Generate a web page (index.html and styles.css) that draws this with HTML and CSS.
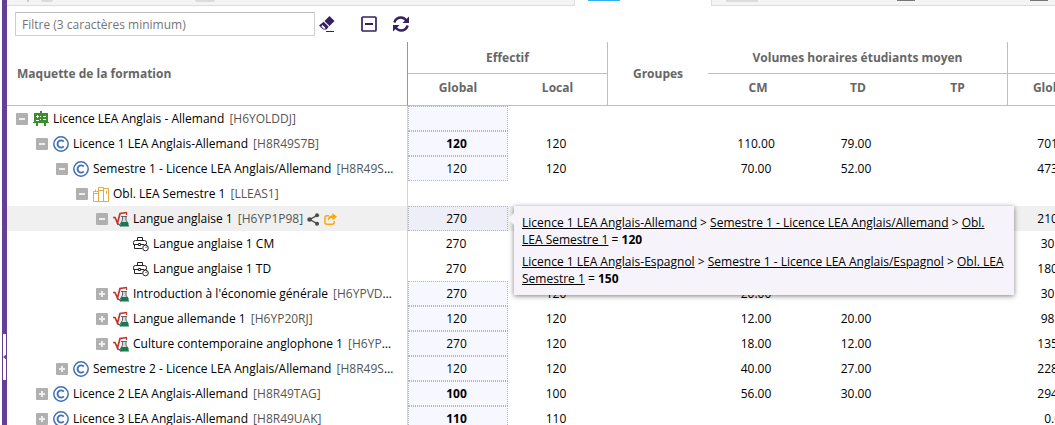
FILE: index.html
```
<!DOCTYPE html>
<html lang="fr">
<head>
    <meta charset="UTF-8">
    <meta name="viewport" content="width=device-width, initial-scale=1.0">
    <title>Maquette de la formation</title>
    <link rel="stylesheet" href="styles.css">
</head>
<body>
    <svg class="sprite" aria-hidden="true">
        <symbol id="i-board" viewBox="0 0 16 16">
            <path fill="#3a8e2b" d="M7 0h2v2h6v9h1v1h-3v3h-2v-3H5v3H3v-3H0v-1h1V2h6z"/>
            <path fill="#fff" d="M3 5h1V4h1v1h1v1H5v1H4V6H3zM10 5h3v1h-3zM3 9h3v1H3zM10 8h3v1h-3zM7 5h1v1H7zM7 8h1v1H7z"/>
        </symbol>
        <symbol id="i-c" viewBox="0 0 16 16">
            <circle cx="8" cy="8" r="7.200" fill="#fff" stroke="#3f6fb5" stroke-width="1.500"/>
            <path fill="none" stroke="#3f6fb5" stroke-width="1.900" d="M10.800 5.600A3.600 3.600 0 1 0 10.800 10.400"/>
        </symbol>
        <symbol id="i-books" viewBox="0 0 16 16">
            <path fill="none" stroke="#e3ac3c" d="M.5 5.500h5v10h-5zM5.500 1.500h5v14h-5zM10.500 2.500h5v13h-5zM.5 7.500h5M5.500 4.500h5M2.500 3.500v2M13.500 5v3"/>
        </symbol>
        <symbol id="i-matter" viewBox="0 0 16 16">
            <path fill="none" stroke="#c8322d" stroke-width="1.700" d="M0 6.500h2L4.500 12 7 2.500 14 1.500"/>
            <path fill="none" stroke="#c8322d" stroke-width="1.200" d="M13.500 1v3"/>
            <path fill="#d8d8d8" stroke="#666" d="M9.500 5.500v3.500l-2 4h7.500l-2-4V5.500zM8 5.500h6"/>
            <path fill="#157a51" d="M8 11h7l1 4.500H7z"/>
            <path stroke="#555" stroke-width="1.400" d="M4 12l4 3"/>
        </symbol>
        <symbol id="i-case" viewBox="0 0 16 16">
            <path fill="none" stroke="#222" d="M9 12.500H1.500V8.500M13.500 8V6.500q0-2-2-2h-9q-2 0-2 2v2h5M8 8.500h3M4.500 4V1.500h5V4M5.500 7.500h2v2h-2z"/>
            <circle cx="12.500" cy="12" r="2.800" fill="#fff" stroke="#222"/>
            <path stroke="#222" stroke-width=".9" d="M12.500 12l1.500-1.500M11.500 8.500h2"/>
        </symbol>
        <symbol id="i-share" viewBox="0 0 14 14">
            <path fill="none" stroke="#4c4c4c" stroke-width="1.400" d="M11 2.500L3 7l8 4.500"/>
            <g fill="#4c4c4c"><circle cx="10.800" cy="2.500" r="2.200"/><circle cx="2.800" cy="7" r="2.500"/><circle cx="10.800" cy="11.500" r="2.200"/></g>
        </symbol>
        <symbol id="i-export" viewBox="0 0 14 14">
            <path fill="none" stroke="#ffa60d" stroke-width="1.600" d="M5.500 3H3Q1 3 1 5v5q0 2 2 2h6q2 0 2-2V8.500"/>
            <path fill="#ffa60d" d="M9 0l5 4-5 4V5.500Q5.500 5.300 4.500 9 3 3.500 9 2.500z"/>
        </symbol>
    </svg>

    <div class="app">
        <div class="side">
            <button class="side-btn" type="button" aria-label="Replier le panneau">
                <svg viewBox="0 0 4 6"><path fill="#663e95" d="M4 0v6L0 3z"/></svg>
            </button>
        </div>
        <main class="main">
            <div class="tabs">
                <div class="tab tab-first"><span class="tick"></span><span class="dot"></span><span class="dot far"></span></div>
                <div class="tab active"><span class="bar blue"></span></div>
                <div class="tab tab-last"><span class="bar"></span><span class="bar dark"></span><span class="bar dark"></span></div>
            </div>
            <div class="toolbar">
                <input class="filter" type="text" placeholder="Filtre (3 caractères minimum)" aria-label="Filtre">
                <button class="tool" type="button" aria-label="Effacer">
                    <svg viewBox="0 0 16 16"><path fill="#35215f" d="M10.500 0L15.500 5 10.500 10 5.500 5zM4.700 5.800l5 5L7.500 13.500H4L0 9.500z"/><path fill="#fff" d="M3.500 9l3 3-.7.700H4.500L2.300 10.200z"/><path stroke="#35215f" d="M7 15.500h8"/></svg>
                </button>
                <button class="tool tool-gap" type="button" aria-label="Tout replier">
                    <svg viewBox="0 0 16 16"><rect x="1" y="1" width="14" height="14" rx="1" fill="none" stroke="#35215f" stroke-width="1.700"/><path stroke="#35215f" stroke-width="2" d="M4 8h8"/></svg>
                </button>
                <button class="tool" type="button" aria-label="Rafraîchir">
                    <svg viewBox="0 0 16 16"><path fill="none" stroke="#35215f" stroke-width="2.400" d="M1.300 6.500Q3 1.500 8 1.500q3 0 5.500 3M14.700 9.500Q13 14.500 8 14.500q-3 0-5.500-3"/><path fill="#35215f" d="M16 .5V7H9.500zM0 15.500V9h6.500z"/></svg>
                </button>
            </div>
            <div class="grid">
                <table>
                    <colgroup><col class="c-tree"><col><col><col><col><col><col><col></colgroup>
                    <thead>
                        <tr>
                            <th class="h-tree" rowspan="2">Maquette de la formation</th>
                            <th class="right" colspan="2">Effectif</th>
                            <th class="tall" rowspan="2">Groupes</th>
                            <th class="right" colspan="3">Volumes horaires étudiants moyen</th>
                            <th></th>
                        </tr>
                        <tr class="sub">
                            <th>Global</th>
                            <th class="right">Local</th>
                            <th>CM</th>
                            <th>TD</th>
                            <th class="right">TP</th>
                            <th class="h-last">Global</th>
                        </tr>
                    </thead>
                    <tbody>
                        <tr>
                            <td class="tree"><div class="node l0"><button class="exp minus" aria-label="Replier"></button><svg class="ico"><use href="#i-board"/></svg>Licence LEA Anglais - Allemand <span class="code">[H6YOLDDJ]</span></div></td>
                            <td class="edit"></td><td></td><td></td><td></td><td></td><td></td><td></td>
                        </tr>
                        <tr>
                            <td class="tree"><div class="node l1"><button class="exp minus" aria-label="Replier"></button><svg class="ico"><use href="#i-c"/></svg>Licence 1 LEA Anglais-Allemand <span class="code">[H8R49S7B]</span></div></td>
                            <td class="edit"><b>120</b></td><td>120</td><td></td><td>110.00</td><td>79.00</td><td></td><td>701.00</td>
                        </tr>
                        <tr>
                            <td class="tree"><div class="node l2"><button class="exp minus" aria-label="Replier"></button><svg class="ico"><use href="#i-c"/></svg>Semestre 1 - Licence LEA Anglais/Allemand <span class="code">[H8R49S1A]</span></div></td>
                            <td class="edit">120</td><td>120</td><td></td><td>70.00</td><td>52.00</td><td></td><td>473.00</td>
                        </tr>
                        <tr>
                            <td class="tree"><div class="node l3"><button class="exp minus" aria-label="Replier"></button><svg class="ico"><use href="#i-books"/></svg>Obl. LEA Semestre 1 <span class="code">[LLEAS1]</span></div></td>
                            <td></td><td></td><td></td><td></td><td></td><td></td><td></td>
                        </tr>
                        <tr class="hover">
                            <td class="tree"><div class="node l4"><button class="exp minus" aria-label="Replier"></button><svg class="ico"><use href="#i-matter"/></svg>Langue anglaise 1 <span class="code">[H6YP1P98]</span><svg class="mini"><use href="#i-share"/></svg><svg class="mini"><use href="#i-export"/></svg></div></td>
                            <td class="edit">270
                                <div class="tip" role="tooltip">
                                    <p><a href="#">Licence 1 LEA Anglais-Allemand</a> &gt; <a href="#">Semestre 1 - Licence LEA Anglais/Allemand</a> &gt; <a href="#">Obl. LEA Semestre 1</a> = <b>120</b></p>
                                    <p><a href="#">Licence 1 LEA Anglais-Espagnol</a> &gt; <a href="#">Semestre 1 - Licence LEA Anglais/Espagnol</a> &gt; <a href="#">Obl. LEA Semestre 1</a> = <b>150</b></p>
                                </div>
                            </td><td></td><td></td><td></td><td></td><td></td><td>210.00</td>
                        </tr>
                        <tr>
                            <td class="tree"><div class="node l5"><svg class="ico"><use href="#i-case"/></svg>Langue anglaise 1 CM</div></td>
                            <td>270</td><td></td><td></td><td></td><td></td><td></td><td>30.00</td>
                        </tr>
                        <tr>
                            <td class="tree"><div class="node l5"><svg class="ico"><use href="#i-case"/></svg>Langue anglaise 1 TD</div></td>
                            <td>270</td><td></td><td></td><td></td><td></td><td></td><td>180.00</td>
                        </tr>
                        <tr>
                            <td class="tree"><div class="node l4"><button class="exp" aria-label="Déplier"></button><svg class="ico"><use href="#i-matter"/></svg>Introduction à l'économie générale <span class="code">[H6YPVDK2]</span></div></td>
                            <td class="edit">270</td><td>120</td><td></td><td>20.00</td><td></td><td></td><td>30.00</td>
                        </tr>
                        <tr>
                            <td class="tree"><div class="node l4"><button class="exp" aria-label="Déplier"></button><svg class="ico"><use href="#i-matter"/></svg>Langue allemande 1 <span class="code">[H6YP20RJ]</span></div></td>
                            <td class="edit">120</td><td>120</td><td></td><td>12.00</td><td>20.00</td><td></td><td>98.00</td>
                        </tr>
                        <tr>
                            <td class="tree"><div class="node l4"><button class="exp" aria-label="Déplier"></button><svg class="ico"><use href="#i-matter"/></svg>Culture contemporaine anglophone 1 <span class="code">[H6YP3C7D]</span></div></td>
                            <td class="edit">270</td><td>120</td><td></td><td>18.00</td><td>12.00</td><td></td><td>135.00</td>
                        </tr>
                        <tr>
                            <td class="tree"><div class="node l2"><button class="exp" aria-label="Déplier"></button><svg class="ico"><use href="#i-c"/></svg>Semestre 2 - Licence LEA Anglais/Allemand <span class="code">[H8R49S2A]</span></div></td>
                            <td class="edit">120</td><td>120</td><td></td><td>40.00</td><td>27.00</td><td></td><td>228.00</td>
                        </tr>
                        <tr>
                            <td class="tree"><div class="node l1"><button class="exp" aria-label="Déplier"></button><svg class="ico"><use href="#i-c"/></svg>Licence 2 LEA Anglais-Allemand <span class="code">[H8R49TAG]</span></div></td>
                            <td class="edit"><b>100</b></td><td>100</td><td></td><td>56.00</td><td>30.00</td><td></td><td>294.00</td>
                        </tr>
                        <tr>
                            <td class="tree"><div class="node l1"><button class="exp" aria-label="Déplier"></button><svg class="ico"><use href="#i-c"/></svg>Licence 3 LEA Anglais-Allemand <span class="code">[H8R49UAK]</span></div></td>
                            <td class="edit"><b>110</b></td><td>110</td><td></td><td></td><td></td><td></td><td>0.00</td>
                        </tr>
                    </tbody>
                </table>
            </div>
        </main>
    </div>
</body>
</html>
```
FILE: styles.css
```
*{
    box-sizing: border-box;
}
body{
    margin: 0;
    font-family: "Open Sans", sans-serif;
    font-size: 12px;
    color: #000;
    background-color: #fff;
    overflow: hidden;
}
button{
    padding: 0;
    border: 0;
    background: none;
    cursor: pointer;
}
.sprite{
    display: none;
}
.app{
    display: flex;
    height: 100vh;
}

/* barre violette */
.side{
    flex: none;
    width: 5px;
    margin-left: 2px;
    background-color: #663e95;
    padding-top: 334px;
}
.side-btn{
    display: flex;
    align-items: center;
    justify-content: flex-end;
    width: 3px;
    height: 46px;
    margin-left: 1px;
    background-color: #fff;
}
.side-btn svg{
    flex: none;
    width: 3px;
    height: 6px;
}
.main{
    flex: 1;
    min-width: 0;
    overflow: hidden;
}

/* onglets */
.tabs{
    display: flex;
    height: 6px;
}
.tab{
    display: flex;
    border-bottom: 1px solid #dcdcdc;
    background-color: #f4f4f4;
}
.tab-first{
    width: 568px;
    border-right: 1px solid #dcdcdc;
    padding-left: 20px;
}
.tab.active{
    width: 136px;
    background-color: #fff;
    border-bottom: 0;
    padding-left: 13px;
}
.tab-last{
    flex: 1;
    border-left: 1px solid #dcdcdc;
    padding-left: 14px;
}
.tick{
    width: 2px;
    height: 2px;
    background-color: #ccc;
}
.dot{
    width: 12px;
    height: 2px;
    margin-left: 12px;
    border-radius: 0 0 6px 6px;
    background-color: #dcdcdc;
}
.dot.far{
    width: 20px;
    margin-left: 142px;
}
.bar{
    width: 32px;
    height: 2px;
    background-color: #dcdcdc;
}
.bar.blue{
    height: 1px;
    background-color: #35b0ee;
}
.bar.dark{
    width: 18px;
    height: 1px;
    margin-left: 139px;
    background-color: #777;
}
.bar.dark + .bar.dark{
    margin-left: 115px;
}

/* filtre */
.toolbar{
    display: flex;
    align-items: center;
    gap: 16px;
    height: 36px;
    padding-left: 8px;
}
.filter{
    width: 300px;
    height: 24px;
    margin-right: -12px;
    padding: 0 6px;
    border: 1px solid #cfcfcf;
    border-top-color: #bbb;
    font: inherit;
    color: #666;
}
.filter::placeholder{
    color: #757575;
}
.tool{
    width: 16px;
    height: 16px;
}
.tool-gap{
    margin-left: 10px;
}
.tool svg{
    display: block;
    width: 16px;
    height: 16px;
}

/* tableau */
table{
    table-layout: fixed;
    width: 1101px;
    border-collapse: separate;
    border-spacing: 0;
}
col{
    width: 100px;
}
.c-tree{
    width: 401px;
}
th{
    height: 32px;
    padding: 0;
    border-bottom: 1px solid #bfbfbf;
    color: #666;
    text-align: center;
}
.sub th{
    padding-bottom: 4px;
}
.sub .h-last{
    padding-right: 12px;
}
.right{
    border-right: 1px solid #bfbfbf;
}
.tall{
    padding-bottom: 1px;
}
.h-tree{
    padding: 0 0 1px 10px;
    border-right: 1px solid #3db5e6;
    text-align: left;
}
td{
    height: 25px;
    padding: 0 4px 0 0;
    text-align: center;
    line-height: 17px;
}
td.edit{
    position: relative;
    padding-right: 3px;
    border: 1px dotted #b4b4c0;
    background-color: #f7f7ff;
}
td.tree{
    padding: 0 13px 0 9px;
    border-right: 1px solid #d5d5d5;
    text-align: left;
}
.hover td{
    background-color: #f0f0f0;
}
.hover td.edit{
    background-color: #eeeef8;
}
.node{
    overflow: hidden;
    white-space: nowrap;
    text-overflow: ellipsis;
}
.l1{ margin-left: 20px; }
.l2{ margin-left: 40px; }
.l3{ margin-left: 60px; }
.l4{ margin-left: 80px; }
.l5{ margin-left: 117px; }
.code{
    margin-left: 2px;
    color: #555;
}
.exp{
    width: 12px;
    height: 12px;
    margin-right: 5px;
    border-radius: 1px;
    vertical-align: middle;
    background:
        linear-gradient(#eee, #eee) no-repeat center / 6px 2px,
        linear-gradient(#eee, #eee) no-repeat center / 2px 6px,
        #b0b0b0;
}
.exp.minus{
    background: #b0b0b0 linear-gradient(#eee, #eee) no-repeat center / 6px 2px;
}
.ico{
    width: 16px;
    height: 16px;
    margin-right: 4px;
    vertical-align: middle;
}
.mini{
    width: 13px;
    height: 13px;
    margin-left: 4px;
    vertical-align: middle;
}

/* infobulle */
.tip{
    position: absolute;
    top: -1px;
    left: 105px;
    z-index: 10;
    width: 500px;
    padding: 8px;
    background-color: #f6f4fa;
    box-shadow: 0 1px 5px rgba(0, 0, 0, .5);
    text-align: left;
    line-height: 17px;
}
.tip::before{
    content: "";
    position: absolute;
    top: 7px;
    left: -6px;
    border: 6px solid transparent;
    border-left: 0;
    border-right-color: #f6f4fa;
}
.tip p{
    margin: 0;
}
.tip p + p{
    margin-top: 5px;
}
.tip a{
    color: #000;
    text-decoration: underline;
}
```
